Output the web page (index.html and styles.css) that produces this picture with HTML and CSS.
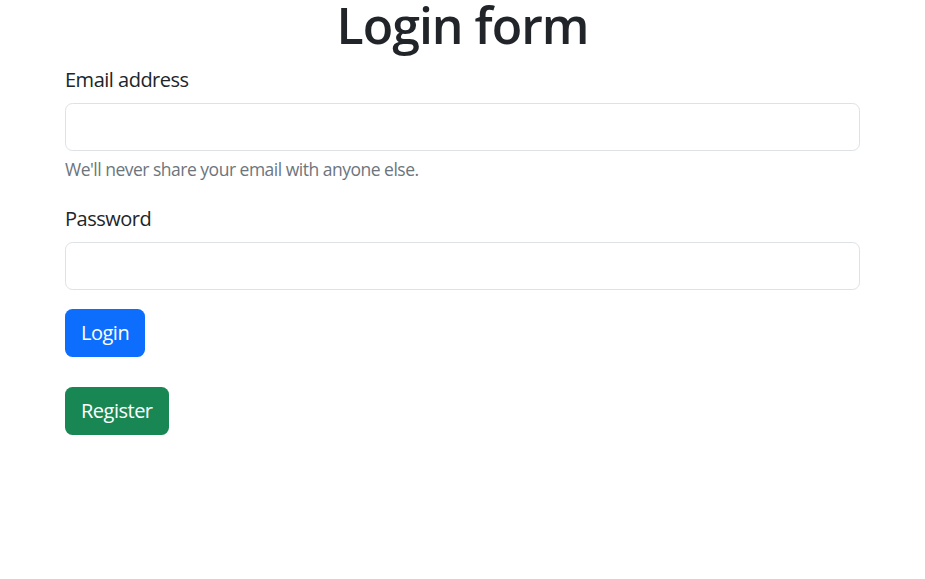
FILE: index.html
```html
<!DOCTYPE html>
<html lang="en">

<head>
      <meta charset="UTF-8">
      <meta name="viewport" content="width=device-width, initial-scale=1.0">
      <title>Login form</title>
      <link rel="stylesheet" href="styles.css">
</head>

<body>
      <h1 class="title">Login form</h1>
      <div class="wrapper">
            <form class="login-form">
                  <div class="field">
                        <label class="field-label" for="email">Email address</label>
                        <input class="field-input" type="email" id="email">
                        <div class="field-help">We'll never share your email with anyone else.</div>
                  </div>
                  <div class="field">
                        <label class="field-label" for="password">Password</label>
                        <input class="field-input" type="password" id="password">
                  </div>
                  <button type="submit" class="btn btn-login">Login</button>
            </form>
            <div class="register">
                  <button class="btn btn-register">Register</button>
            </div>
      </div>
</body>

</html>
```

FILE: styles.css
```css
* {
      box-sizing: border-box;
}

body {
      margin: 0;
      padding: 0;
      font-family: "Open Sans", "Noto Sans", sans-serif;
      font-size: 20px;
      line-height: 1.5;
      letter-spacing: -0.5px;
      color: #212529;
      background-color: #fff;
}

.title {
      margin: 0 0 13px;
      text-align: center;
      font-size: 50px;
      font-weight: 600;
      line-height: 50px;
      letter-spacing: -1px;
}

.wrapper {
      margin: 0 65px;
}

.field {
      margin-bottom: 20px;
}

.field-label {
      display: inline-block;
      padding-top: 2px;
      margin-bottom: 8px;
}

.field-input {
      display: block;
      width: 100%;
      height: 48px;
      padding: 7px 15px;
      font: inherit;
      color: #212529;
      background-color: #fff;
      border: 1px solid #dee2e6;
      border-radius: 7.5px;
      outline: none;
}

.field-help {
      margin-top: 5px;
      font-size: 17.5px;
      color: #6c757d;
}

.btn {
      display: inline-block;
      height: 48px;
      padding: 0 15px;
      font: inherit;
      letter-spacing: -0.5px;
      color: #fff;
      border: 1px solid transparent;
      border-radius: 7.5px;
      cursor: pointer;
}

.btn-login {
      margin-top: -1px;
      background-color: #0d6efd;
}

.btn-register {
      background-color: #198754;
}

.register {
      margin-top: 30px;
}
```
